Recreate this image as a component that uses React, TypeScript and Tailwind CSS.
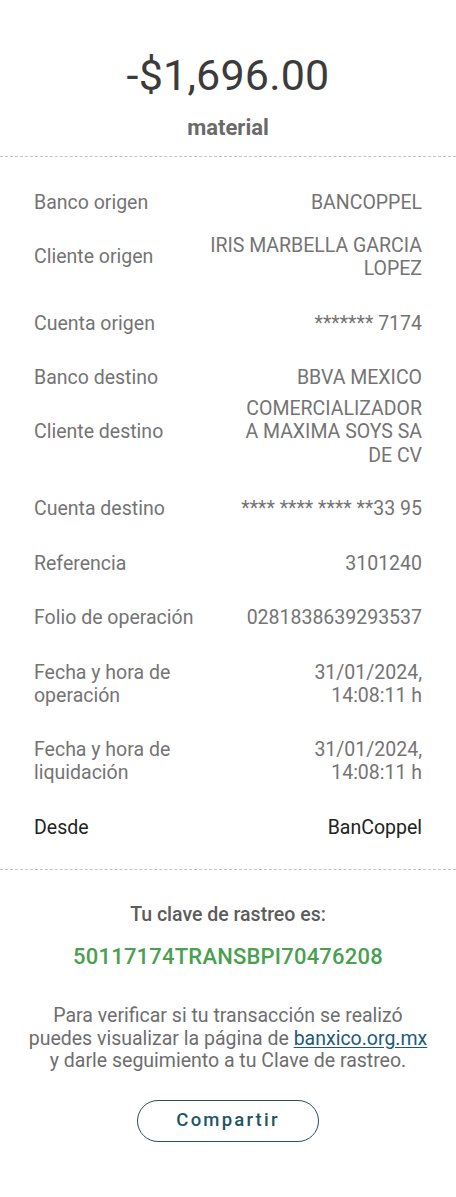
import React from 'react';

type Row = { label: string[]; value: string[]; mt: string; strong?: boolean };

const rows: Row[] = [
  { label: ['Banco origen'], value: ['BANCOPPEL'], mt: 'mt-0' },
  { label: ['Cliente origen'], value: ['IRIS MARBELLA GARCIA', 'LOPEZ'], mt: 'mt-[19px]' },
  { label: ['Cuenta origen'], value: ['******* 7174'], mt: 'mt-[31px]' },
  { label: ['Banco destino'], value: ['BBVA MEXICO'], mt: 'mt-[31px]' },
  { label: ['Cliente destino'], value: ['COMERCIALIZADOR', 'A MAXIMA SOYS SA', 'DE CV'], mt: 'mt-[7px]' },
  { label: ['Cuenta destino'], value: ['**** **** **** **33 95'], mt: 'mt-[30px]' },
  { label: ['Referencia'], value: ['3101240'], mt: 'mt-[31px]' },
  { label: ['Folio de operación'], value: ['0281838639293537'], mt: 'mt-[31px]' },
  { label: ['Fecha y hora de', 'operación'], value: ['31/01/2024,', '14:08:11 h'], mt: 'mt-[31px]' },
  { label: ['Fecha y hora de', 'liquidación'], value: ['31/01/2024,', '14:08:11 h'], mt: 'mt-[30px]' },
  { label: ['Desde'], value: ['BanCoppel'], mt: 'mt-[31px]', strong: true },
];

export default function App() {
  return (
    <div className="w-[456px] min-h-[1197px] bg-white font-['Roboto',sans-serif]">
      {/* Amount */}
      <div className="flex flex-col items-center pt-[52px]">
        <h1 className="text-[43px] leading-[46px] text-[#3b3b3b] tracking-[0.2px]">-$1,696.00</h1>
        <p className="mt-[16px] text-[22px] leading-[27px] font-bold text-[#6a6a6a]">material</p>
      </div>

      <div className="mt-[15px] border-t border-dashed border-[#c4c4c4]" />

      {/* Details */}
      <div className="flex flex-col px-[34px] pt-[34px] pb-[30px]">
        {rows.map((r, i) => (
          <div key={i} className={`flex items-center justify-between gap-4 ${r.mt}`}>
            <div className={`text-[19.5px] leading-[23.5px] ${r.strong ? 'text-[#222222]' : 'text-[#747474]'}`}>
              {r.label.map((l, j) => (
                <div key={j}>{l}</div>
              ))}
            </div>
            <div className={`text-right text-[19.5px] leading-[23.5px] ${r.strong ? 'text-[#222222]' : 'text-[#747474]'}`}>
              {r.value.map((v, j) => (
                <div key={j} className="whitespace-nowrap">{v}</div>
              ))}
            </div>
          </div>
        ))}
      </div>

      <div className="border-t border-dashed border-[#c4c4c4]" />

      {/* Tracking */}
      <div className="flex flex-col items-center px-4 pt-[32px]">
        <p className="text-[19.5px] leading-[25px] font-medium text-[#5c5c5c]">Tu clave de rastreo es:</p>
        <p className="mt-[16px] text-[22px] leading-[27px] font-medium text-[#4a9f50] tracking-[0.2px]">50117174TRANSBPI70476208</p>
        <p className="mt-[35px] text-center text-[19.5px] leading-[22.5px] text-[#6e6e6e]">
          Para verificar si tu transacción se realizó
          <br />
          puedes visualizar la página de{' '}
          <a href="#" className="text-[#1c5a7c] underline underline-offset-2">banxico.org.mx</a>
          <br />
          y darle seguimiento a tu Clave de rastreo.
        </p>
        <button className="mt-[27px] h-[42px] w-[182px] rounded-full border border-[#2b4f58] text-[18.5px] font-medium tracking-[2.2px] text-[#1d5466]">
          Compartir
        </button>
      </div>
    </div>
  );
}
